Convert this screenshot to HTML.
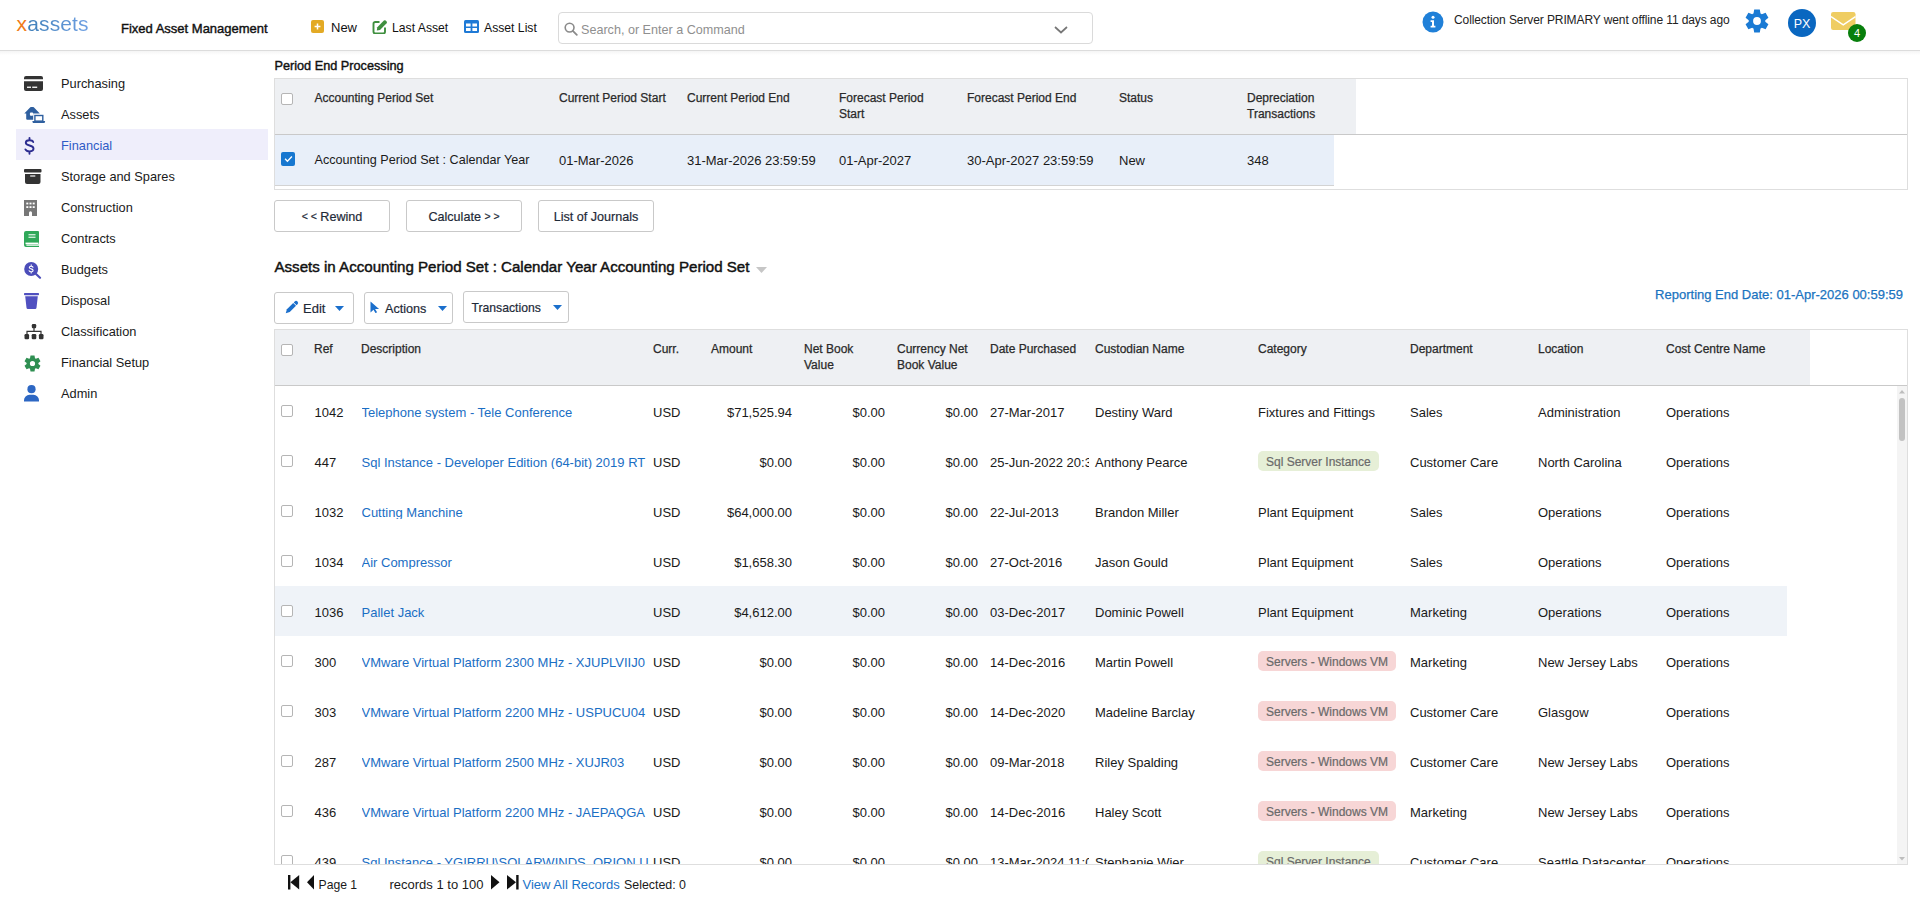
<!DOCTYPE html><html><head><meta charset="utf-8"><style>
html,body{margin:0;padding:0;background:#fff;width:1920px;height:911px;overflow:hidden;position:relative}
body{font-family:"Liberation Sans",sans-serif;}
.t{position:absolute;white-space:nowrap;line-height:1;}
.b{position:absolute;}
.sb{-webkit-text-stroke:0.25px currentColor;}
</style></head><body>
<div class="b" style="left:0px;top:50px;width:1920px;height:1px;background:#dcdcdc"></div>
<div class="b" style="left:0px;top:51px;width:1920px;height:4px;background:linear-gradient(#f5f5f5,#fff)"></div>
<div class="t" style="left:16.5px;top:12.7px;font-size:21px;letter-spacing:0.15px;"><span style="color:#f07b17">x</span><span style="background:linear-gradient(90deg,#3f7fb8,#6fa0e3);-webkit-background-clip:text;color:transparent">assets</span></div>
<div class="t" style="left:121px;top:22.00px;font-size:13px;color:#111;-webkit-text-stroke:0.4px #111">Fixed Asset Management</div>
<svg class="b" style="left:311px;top:20px" width="13" height="13" viewBox="0 0 13 13"><rect x="0" y="0" width="13" height="13" rx="2" fill="#e3aa25"/><path d="M6.5 3.6v5.8M3.6 6.5h5.8" stroke="#fff" stroke-width="1.5"/></svg>
<div class="t" style="left:331px;top:21.00px;font-size:13px;color:#111;">New</div>
<svg class="b" style="left:372px;top:19px" width="16" height="15" viewBox="0 0 16 15"><path d="M7.5 3H3.2A1.7 1.7 0 0 0 1.5 4.7v8.1A1.7 1.7 0 0 0 3.2 14.5h8.1A1.7 1.7 0 0 0 13 12.8V8.5" fill="none" stroke="#3f8f3f" stroke-width="1.9"/><path d="M5.3 8.2L11.9 1.6a1.3 1.3 0 0 1 1.8 0l.9.9a1.3 1.3 0 0 1 0 1.8L8 10.9 4.8 11.5z" fill="#3f8f3f"/></svg>
<div class="t" style="left:392px;top:21.90px;font-size:12.2px;color:#111;">Last Asset</div>
<svg class="b" style="left:464px;top:20px" width="15" height="13" viewBox="0 0 15 13"><rect x="0" y="0" width="15" height="13" rx="1.5" fill="#1f7ad6"/><rect x="2" y="3.5" width="4.6" height="3" fill="#fff"/><rect x="8.4" y="3.5" width="4.6" height="3" fill="#fff"/><rect x="2" y="8" width="4.6" height="3" fill="#fff"/><rect x="8.4" y="8" width="4.6" height="3" fill="#fff"/></svg>
<div class="t" style="left:484px;top:21.90px;font-size:12.2px;color:#111;">Asset List</div>
<div class="b" style="left:558px;top:12px;width:533px;height:30px;border:1px solid #dadada;border-radius:4px;"></div>
<svg class="b" style="left:564px;top:22px" width="14" height="14" viewBox="0 0 14 14"><circle cx="5.6" cy="5.6" r="4.4" fill="none" stroke="#8a8a8a" stroke-width="1.6"/><path d="M8.8 8.8l4 4" stroke="#8a8a8a" stroke-width="1.8" stroke-linecap="round"/></svg>
<div class="t" style="left:581px;top:24.00px;font-size:12.6px;color:#8f8f8f;">Search, or Enter a Command</div>
<svg class="b" style="left:1054px;top:26px" width="14" height="8" viewBox="0 0 14 8"><path d="M1 1l6 5.5L13 1" fill="none" stroke="#777" stroke-width="1.7"/></svg>
<svg class="b" style="left:1422px;top:11px" width="22" height="22" viewBox="0 0 22 22"><circle cx="11" cy="11" r="10.5" fill="#2080d8"/><circle cx="11" cy="6.3" r="1.5" fill="#fff"/><path d="M8.6 9.2h3.4v5.6h1.4v1.8H8.6v-1.8h1.4v-3.8H8.6z" fill="#fff"/></svg>
<div class="t" style="left:1454px;top:14.00px;font-size:12px;color:#222;letter-spacing:-0.1px">Collection Server PRIMARY went offline 11 days ago</div>
<svg class="b" style="left:1744.5px;top:9px" width="24" height="24" viewBox="0 0 24 24"><path fill="#1a7ad4" fill-rule="evenodd" d="M8.50 4.47L9.20 0.43L14.80 0.43L15.50 4.47A8.3 8.3 0 0 1 16.77 5.21L20.62 3.79L23.42 8.64L20.27 11.27A8.3 8.3 0 0 1 20.27 12.73L23.42 15.36L20.62 20.21L16.77 18.79A8.3 8.3 0 0 1 15.50 19.53L14.80 23.57L9.20 23.57L8.50 19.53A8.3 8.3 0 0 1 7.23 18.79L3.38 20.21L0.58 15.36L3.73 12.73A8.3 8.3 0 0 1 3.73 11.27L0.58 8.64L3.38 3.79L7.23 5.21A8.3 8.3 0 0 1 8.50 4.47ZM15.90 12.00A3.9 3.9 0 1 0 8.10 12.00A3.9 3.9 0 1 0 15.90 12.00Z"/></svg>
<div class="b" style="left:1788px;top:9px;width:28px;height:28px;border-radius:50%;background:#0a67c0"></div>
<div class="t" style="left:1790px;top:17.75px;font-size:12.5px;color:#fff;width:24px;text-align:center">PX</div>
<svg class="b" style="left:1830.5px;top:12px" width="25" height="18" viewBox="0 0 25 18"><rect x="0" y="0" width="24.5" height="18" rx="2.2" fill="#efcd62"/><path d="M0 4.6l12.25 8.3L24.5 4.6" fill="none" stroke="#fff" stroke-width="1.5"/></svg>
<div class="b" style="left:1848px;top:24px;width:18px;height:18px;border-radius:50%;background:#087f0c"></div>
<div class="t" style="left:1848px;top:27.50px;font-size:11px;color:#fff;width:18px;text-align:center">4</div>
<div class="b" style="left:16px;top:129px;width:252px;height:31px;background:#efeefb"></div>
<div class="t" style="left:61px;top:77.60px;font-size:12.8px;color:#1a1a1a;">Purchasing</div>
<div class="t" style="left:61px;top:108.60px;font-size:12.8px;color:#1a1a1a;">Assets</div>
<div class="t" style="left:61px;top:139.60px;font-size:12.8px;color:#2f5bc6;">Financial</div>
<div class="t" style="left:61px;top:170.60px;font-size:12.8px;color:#1a1a1a;">Storage and Spares</div>
<div class="t" style="left:61px;top:201.60px;font-size:12.8px;color:#1a1a1a;">Construction</div>
<div class="t" style="left:61px;top:232.60px;font-size:12.8px;color:#1a1a1a;">Contracts</div>
<div class="t" style="left:61px;top:263.60px;font-size:12.8px;color:#1a1a1a;">Budgets</div>
<div class="t" style="left:61px;top:294.60px;font-size:12.8px;color:#1a1a1a;">Disposal</div>
<div class="t" style="left:61px;top:325.60px;font-size:12.8px;color:#1a1a1a;">Classification</div>
<div class="t" style="left:61px;top:356.60px;font-size:12.8px;color:#1a1a1a;">Financial Setup</div>
<div class="t" style="left:61px;top:387.60px;font-size:12.8px;color:#1a1a1a;">Admin</div>
<svg class="b" style="left:24px;top:76px" width="19" height="15" viewBox="0 0 19 15"><path d="M2 0h15a2 2 0 0 1 2 2v1.3H0V2a2 2 0 0 1 2-2z" fill="#333"/><path d="M0 5.2h19v7.8a2 2 0 0 1-2 2H2a2 2 0 0 1-2-2z" fill="#333"/><rect x="3" y="10.6" width="4" height="1.3" fill="#fff"/><rect x="8.2" y="10.6" width="5" height="1.3" fill="#fff"/></svg>
<svg class="b" style="left:24px;top:106px" width="22" height="18" viewBox="0 0 22 18"><path d="M0.3 7.6L6.3 1.3Q6.6 1 7 1H9.1Q9.5 1 9.8 1.3L15.8 7.6H9.2V13.8H3.3Q2.2 13.8 2.2 12.7V7.6Z" fill="#2e5f9f"/><rect x="5.9" y="6.5" width="3.3" height="3.3" rx="1" fill="#fff"/><rect x="10.9" y="9.5" width="7.9" height="5.6" fill="none" stroke="#2e5f9f" stroke-width="1.4"/><path d="M8.3 15H21.2L20.6 16.9H8.9Z" fill="#2e5f9f"/></svg>
<svg class="b" style="left:24px;top:137px" width="11" height="18" viewBox="0 0 11 18"><path d="M9.2 5C8.7 3.8 7.3 3.2 5.4 3.2 3.2 3.2 1.8 4.2 1.8 5.7c0 1.8 1.9 2.3 3.8 2.8 2 .5 3.9 1.1 3.9 3.1 0 1.7-1.6 2.8-4 2.8-2 0-3.5-.7-4.1-2 M5.5 1v2.2 M5.5 14.4v2.3" fill="none" stroke="#2c2c90" stroke-width="1.9" stroke-linecap="round"/></svg>
<svg class="b" style="left:24px;top:169px" width="18" height="15" viewBox="0 0 18 15"><rect x="0" y="0" width="17.5" height="3.6" rx="1" fill="#333"/><path d="M1 5h15.5v8a2 2 0 0 1-2 2H3a2 2 0 0 1-2-2z" fill="#333"/><rect x="6" y="6.3" width="5.5" height="1.5" rx=".7" fill="#d0d0d0"/></svg>
<svg class="b" style="left:24px;top:200px" width="13" height="16" viewBox="0 0 13 16"><path d="M0 0h13v16H8v-3.2a1.5 1.5 0 0 0-3 0V16H0z" fill="#777"/><g fill="#fff"><rect x="2.3" y="2.6" width="2" height="1.8"/><rect x="5.5" y="2.6" width="2" height="1.8"/><rect x="8.7" y="2.6" width="2" height="1.8"/><rect x="2.3" y="6.2" width="2" height="1.8"/><rect x="5.5" y="6.2" width="2" height="1.8"/><rect x="8.7" y="6.2" width="2" height="1.8"/></g></svg>
<svg class="b" style="left:24px;top:231px" width="16" height="16" viewBox="0 0 16 16"><path d="M2 0h12a1 1 0 0 1 1 1v11.5a1 1 0 0 1-1 1H2.5a1 1 0 0 0 0 1.2H15V16H2a2 2 0 0 1-2-2V2a2 2 0 0 1 2-2z" fill="#2fa859"/><rect x="4.5" y="3" width="7" height="1.4" fill="#c9ecd5"/><rect x="4.5" y="5.6" width="7" height="1.4" fill="#c9ecd5"/><rect x="1.5" y="11.6" width="13" height="1.6" fill="#fff"/></svg>
<svg class="b" style="left:24px;top:262px" width="18" height="17" viewBox="0 0 18 17"><circle cx="7.2" cy="7" r="7" fill="#4b4db9"/><path d="M11.5 11.5l4.5 4.2" stroke="#4b4db9" stroke-width="2.2" stroke-linecap="round"/><path d="M9 5.2C8.7 4.5 8 4.2 7.1 4.2 6 4.2 5.3 4.7 5.3 5.5c0 .9 1 1.1 1.9 1.4 1 .3 1.9.6 1.9 1.5 0 .9-.8 1.4-2 1.4-1 0-1.7-.4-2-1 M7.2 2.9v1.2M7.2 9.8v1.2" fill="none" stroke="#fff" stroke-width="1.1" stroke-linecap="round"/></svg>
<svg class="b" style="left:24px;top:293px" width="15" height="16" viewBox="0 0 15 16"><rect x="0" y="0" width="15" height="2.2" rx=".8" fill="#5050c0"/><path d="M1.2 3.3h12.6l-1.3 11.5a1.4 1.4 0 0 1-1.4 1.2H3.9a1.4 1.4 0 0 1-1.4-1.2z" fill="#5050c0"/></svg>
<svg class="b" style="left:24px;top:324px" width="20" height="16" viewBox="0 0 20 16"><rect x="7.8" y="0" width="4.4" height="4.2" rx="1.2" fill="#333"/><path d="M10 4v3.3M3 10V7.3h14V10" fill="none" stroke="#333" stroke-width="1.2"/><rect x="0.5" y="10" width="4.6" height="5.2" rx="1.2" fill="#333"/><rect x="7.7" y="10" width="4.6" height="5.2" rx="1.2" fill="#333"/><rect x="14.9" y="10" width="4.6" height="5.2" rx="1.2" fill="#333"/></svg>
<svg class="b" style="left:24px;top:355px" width="17" height="17" viewBox="0 0 17 17"><path fill="#2f8f52" fill-rule="evenodd" d="M6.00 3.16L6.50 0.44L10.50 0.44L11.00 3.16A5.9 5.9 0 0 1 11.88 3.66L14.48 2.74L16.48 6.20L14.38 7.99A5.9 5.9 0 0 1 14.38 9.01L16.48 10.80L14.48 14.26L11.88 13.34A5.9 5.9 0 0 1 11.00 13.84L10.50 16.56L6.50 16.56L6.00 13.84A5.9 5.9 0 0 1 5.12 13.34L2.52 14.26L0.52 10.80L2.62 9.01A5.9 5.9 0 0 1 2.62 7.99L0.52 6.20L2.52 2.74L5.12 3.66A5.9 5.9 0 0 1 6.00 3.16ZM11.10 8.50A2.6 2.6 0 1 0 5.90 8.50A2.6 2.6 0 1 0 11.10 8.50Z"/></svg>
<svg class="b" style="left:24px;top:385px" width="15" height="17" viewBox="0 0 15 17"><circle cx="7.5" cy="4.2" r="4.1" fill="#2d67c3"/><path d="M0 16.5v-1.2a5.5 5.5 0 0 1 5.5-5.5h4a5.5 5.5 0 0 1 5.5 5.5v1.2z" fill="#2d67c3"/></svg>
<div class="t" style="left:274.5px;top:59.65px;font-size:12.7px;color:#111;-webkit-text-stroke:0.4px #111">Period End Processing</div>
<div class="b" style="left:274px;top:78px;width:1634px;height:112px;box-sizing:border-box;border:1px solid #dedede"></div>
<div class="b" style="left:275px;top:79px;width:1081px;height:55px;background:#eef0f3"></div>
<div class="b" style="left:275px;top:134px;width:1632px;height:1px;background:#c9c9c9"></div>
<div class="b" style="left:275px;top:135px;width:1059px;height:50px;background:#e8eff9"></div>
<div class="b" style="left:275px;top:185px;width:1059px;height:1px;background:#d3d3d3"></div>
<div class="b" style="left:281px;top:93px;width:10px;height:10px;border:1px solid #b5b5b5;border-radius:2px;background:#fff"></div>
<div class="t" style="left:314.5px;top:92.00px;font-size:12px;color:#2a2a2a;-webkit-text-stroke:0.25px #2a2a2a">Accounting Period Set</div>
<div class="t" style="left:559px;top:92.00px;font-size:12px;color:#2a2a2a;-webkit-text-stroke:0.25px #2a2a2a">Current Period Start</div>
<div class="t" style="left:687px;top:92.00px;font-size:12px;color:#2a2a2a;-webkit-text-stroke:0.25px #2a2a2a">Current Period End</div>
<div class="t" style="left:839px;top:92.00px;font-size:12px;color:#2a2a2a;-webkit-text-stroke:0.25px #2a2a2a">Forecast Period</div>
<div class="t" style="left:839px;top:108.00px;font-size:12px;color:#2a2a2a;-webkit-text-stroke:0.25px #2a2a2a">Start</div>
<div class="t" style="left:967px;top:92.00px;font-size:12px;color:#2a2a2a;-webkit-text-stroke:0.25px #2a2a2a">Forecast Period End</div>
<div class="t" style="left:1119px;top:92.00px;font-size:12px;color:#2a2a2a;-webkit-text-stroke:0.25px #2a2a2a">Status</div>
<div class="t" style="left:1247px;top:92.00px;font-size:12px;color:#2a2a2a;-webkit-text-stroke:0.25px #2a2a2a">Depreciation</div>
<div class="t" style="left:1247px;top:108.00px;font-size:12px;color:#2a2a2a;-webkit-text-stroke:0.25px #2a2a2a">Transactions</div>
<svg class="b" style="left:281px;top:152px" width="14" height="14" viewBox="0 0 14 14"><rect x="0" y="0" width="14" height="14" rx="2" fill="#1677d0"/><path d="M4.1 6.8L6.4 9.2 10.9 4.5" fill="none" stroke="#fff" stroke-width="1.35"/></svg>
<div class="t" style="left:314.5px;top:154.20px;font-size:12.6px;color:#1a1a1a;">Accounting Period Set : Calendar Year</div>
<div class="t" style="left:559px;top:153.50px;font-size:13px;color:#1a1a1a;">01-Mar-2026</div>
<div class="t" style="left:687px;top:153.50px;font-size:13px;color:#1a1a1a;">31-Mar-2026 23:59:59</div>
<div class="t" style="left:839px;top:153.50px;font-size:13px;color:#1a1a1a;">01-Apr-2027</div>
<div class="t" style="left:967px;top:153.50px;font-size:13px;color:#1a1a1a;">30-Apr-2027 23:59:59</div>
<div class="t" style="left:1119px;top:153.50px;font-size:13px;color:#1a1a1a;">New</div>
<div class="t" style="left:1247px;top:153.50px;font-size:13px;color:#1a1a1a;">348</div>
<div class="b" style="left:274px;top:200px;width:116px;height:32px;box-sizing:border-box;border:1px solid #c9c9c9;border-radius:3px;background:#fff"></div>
<div class="t" style="left:274px;top:210.70px;width:116px;text-align:center;font-size:12.6px;color:#1e2a38;-webkit-text-stroke:0.2px #1e2a38"><span style="font-size:10.5px;position:relative;top:-0.5px">&lt; &lt;</span> Rewind</div>
<div class="b" style="left:406px;top:200px;width:116px;height:32px;box-sizing:border-box;border:1px solid #c9c9c9;border-radius:3px;background:#fff"></div>
<div class="t" style="left:406px;top:210.70px;width:116px;text-align:center;font-size:12.6px;color:#1e2a38;-webkit-text-stroke:0.2px #1e2a38">Calculate <span style="font-size:10.5px;position:relative;top:-0.5px">&gt; &gt;</span></div>
<div class="b" style="left:538px;top:200px;width:116px;height:32px;box-sizing:border-box;border:1px solid #c9c9c9;border-radius:3px;background:#fff"></div>
<div class="t" style="left:538px;top:210.70px;width:116px;text-align:center;font-size:12.6px;color:#1e2a38;-webkit-text-stroke:0.2px #1e2a38">List of Journals</div>
<div class="t" style="left:274.5px;top:258.65px;font-size:15.1px;color:#111;-webkit-text-stroke:0.45px #111">Assets in Accounting Period Set : Calendar Year Accounting Period Set</div>
<svg class="b" style="left:756px;top:267px" width="11" height="6" viewBox="0 0 11 6"><path d="M0 0h11L5.5 6z" fill="#c6c6c6"/></svg>
<div class="b" style="left:274px;top:292px;width:80px;height:32px;box-sizing:border-box;border:1px solid #c9c9c9;border-radius:3px"></div>
<svg class="b" style="left:283.5px;top:299.5px" width="15" height="15" viewBox="0 0 15 15"><g transform="rotate(45 7.5 7.5)" fill="#1b6fcc"><path d="M5.5 3.1h4v8.9l-2 3.6-2-3.6z"/><path d="M5.5 2.3V1a2 2 0 0 1 4 0v1.3z"/></g></svg>
<div class="t" style="left:303px;top:302.00px;font-size:13px;color:#1e2a38;-webkit-text-stroke:0.2px #1e2a38">Edit</div>
<svg class="b" style="left:335px;top:306px" width="9" height="5" viewBox="0 0 9 5"><path d="M0 0h9L4.5 5z" fill="#1b6fcc"/></svg>
<div class="b" style="left:364px;top:292px;width:89px;height:32px;box-sizing:border-box;border:1px solid #c9c9c9;border-radius:3px"></div>
<svg class="b" style="left:370px;top:301px" width="10" height="12" viewBox="0 0 10 12"><path d="M0.5 0.5v11l3-2.8 2 3.4 1.6-.9-2-3.3h4z" fill="#1b6fcc"/></svg>
<div class="t" style="left:385px;top:302.70px;font-size:12.6px;color:#1e2a38;-webkit-text-stroke:0.2px #1e2a38">Actions</div>
<svg class="b" style="left:437.5px;top:306px" width="9" height="5" viewBox="0 0 9 5"><path d="M0 0h9L4.5 5z" fill="#1b6fcc"/></svg>
<div class="b" style="left:463px;top:291px;width:106px;height:32px;box-sizing:border-box;border:1px solid #c9c9c9;border-radius:3px"></div>
<div class="t" style="left:471.5px;top:301.90px;font-size:12.2px;color:#1e2a38;-webkit-text-stroke:0.2px #1e2a38">Transactions</div>
<svg class="b" style="left:553px;top:305px" width="9" height="5" viewBox="0 0 9 5"><path d="M0 0h9L4.5 5z" fill="#1b6fcc"/></svg>
<div class="t" style="right:17px;top:288.00px;font-size:13px;color:#1a73c0;-webkit-text-stroke:0.25px #1a73c0">Reporting End Date: 01-Apr-2026 00:59:59</div>
<div class="b" style="left:274px;top:329px;width:1634px;height:536px;box-sizing:border-box;border:1px solid #dedede"></div>
<div class="b" style="left:275px;top:330px;width:1535px;height:55px;background:#eef0f3"></div>
<div class="b" style="left:275px;top:385px;width:1632px;height:1px;background:#c9c9c9"></div>
<div class="b" style="left:281px;top:344px;width:10px;height:10px;border:1px solid #b5b5b5;border-radius:2px;background:#fff"></div>
<div class="t" style="left:314px;top:343.00px;font-size:12px;color:#2a2a2a;-webkit-text-stroke:0.25px #2a2a2a">Ref</div>
<div class="t" style="left:361px;top:343.00px;font-size:12px;color:#2a2a2a;-webkit-text-stroke:0.25px #2a2a2a">Description</div>
<div class="t" style="left:653px;top:343.00px;font-size:12px;color:#2a2a2a;-webkit-text-stroke:0.25px #2a2a2a">Curr.</div>
<div class="t" style="left:711px;top:343.00px;font-size:12px;color:#2a2a2a;-webkit-text-stroke:0.25px #2a2a2a">Amount</div>
<div class="t" style="left:804px;top:343.00px;font-size:12px;color:#2a2a2a;-webkit-text-stroke:0.25px #2a2a2a">Net Book</div>
<div class="t" style="left:804px;top:359.00px;font-size:12px;color:#2a2a2a;-webkit-text-stroke:0.25px #2a2a2a">Value</div>
<div class="t" style="left:897px;top:343.00px;font-size:12px;color:#2a2a2a;-webkit-text-stroke:0.25px #2a2a2a">Currency Net</div>
<div class="t" style="left:897px;top:359.00px;font-size:12px;color:#2a2a2a;-webkit-text-stroke:0.25px #2a2a2a">Book Value</div>
<div class="t" style="left:990px;top:343.00px;font-size:12px;color:#2a2a2a;-webkit-text-stroke:0.25px #2a2a2a">Date Purchased</div>
<div class="t" style="left:1095px;top:343.00px;font-size:12px;color:#2a2a2a;-webkit-text-stroke:0.25px #2a2a2a">Custodian Name</div>
<div class="t" style="left:1258px;top:343.00px;font-size:12px;color:#2a2a2a;-webkit-text-stroke:0.25px #2a2a2a">Category</div>
<div class="t" style="left:1410px;top:343.00px;font-size:12px;color:#2a2a2a;-webkit-text-stroke:0.25px #2a2a2a">Department</div>
<div class="t" style="left:1538px;top:343.00px;font-size:12px;color:#2a2a2a;-webkit-text-stroke:0.25px #2a2a2a">Location</div>
<div class="t" style="left:1666px;top:343.00px;font-size:12px;color:#2a2a2a;-webkit-text-stroke:0.25px #2a2a2a">Cost Centre Name</div>
<div class="b" style="left:275px;top:386px;width:1622px;height:478px;overflow:hidden">
<div class="b" style="left:6px;top:19px;width:10px;height:10px;border:1px solid #b5b5b5;border-radius:2px;background:#fff"></div>
<div class="t" style="left:39.5px;top:20.00px;font-size:13px;color:#1a1a1a;">1042</div>
<div class="t" style="left:86.5px;top:20.00px;font-size:13px;color:#1a6ec4;width:287px;overflow:hidden;">Telephone system - Tele Conference</div>
<div class="t" style="left:378px;top:20.00px;font-size:13px;color:#1a1a1a;">USD</div>
<div class="t" style="right:1105px;top:20.00px;font-size:13px;color:#1a1a1a;">$71,525.94</div>
<div class="t" style="right:1012px;top:20.00px;font-size:13px;color:#1a1a1a;">$0.00</div>
<div class="t" style="right:919px;top:20.00px;font-size:13px;color:#1a1a1a;">$0.00</div>
<div class="t" style="left:715px;top:20.00px;font-size:13px;color:#1a1a1a;width:99px;overflow:hidden;">27-Mar-2017</div>
<div class="t" style="left:820px;top:20.00px;font-size:13px;color:#1a1a1a;">Destiny Ward</div>
<div class="t" style="left:983px;top:20.00px;font-size:13px;color:#1a1a1a;">Fixtures and Fittings</div>
<div class="t" style="left:1135px;top:20.00px;font-size:13px;color:#1a1a1a;">Sales</div>
<div class="t" style="left:1263px;top:20.00px;font-size:13px;color:#1a1a1a;">Administration</div>
<div class="t" style="left:1391px;top:20.00px;font-size:13px;color:#1a1a1a;">Operations</div>
<div class="b" style="left:6px;top:69px;width:10px;height:10px;border:1px solid #b5b5b5;border-radius:2px;background:#fff"></div>
<div class="t" style="left:39.5px;top:70.00px;font-size:13px;color:#1a1a1a;">447</div>
<div class="t" style="left:86.5px;top:70.00px;font-size:13px;color:#1a6ec4;width:287px;overflow:hidden;">Sql Instance - Developer Edition (64-bit) 2019 RT</div>
<div class="t" style="left:378px;top:70.00px;font-size:13px;color:#1a1a1a;">USD</div>
<div class="t" style="right:1105px;top:70.00px;font-size:13px;color:#1a1a1a;">$0.00</div>
<div class="t" style="right:1012px;top:70.00px;font-size:13px;color:#1a1a1a;">$0.00</div>
<div class="t" style="right:919px;top:70.00px;font-size:13px;color:#1a1a1a;">$0.00</div>
<div class="t" style="left:715px;top:70.00px;font-size:13px;color:#1a1a1a;width:99px;overflow:hidden;">25-Jun-2022 20:30</div>
<div class="t" style="left:820px;top:70.00px;font-size:13px;color:#1a1a1a;">Anthony Pearce</div>
<div class="t" style="left:983px;top:65px;height:20px;line-height:20px;padding:0 8px;border-radius:5px;background:#e6efd7;font-size:12px;color:#6a6a6a;-webkit-text-stroke:0.2px #6a6a6a"><span style="position:relative;top:1px">Sql Server Instance</span></div>
<div class="t" style="left:1135px;top:70.00px;font-size:13px;color:#1a1a1a;">Customer Care</div>
<div class="t" style="left:1263px;top:70.00px;font-size:13px;color:#1a1a1a;">North Carolina</div>
<div class="t" style="left:1391px;top:70.00px;font-size:13px;color:#1a1a1a;">Operations</div>
<div class="b" style="left:6px;top:119px;width:10px;height:10px;border:1px solid #b5b5b5;border-radius:2px;background:#fff"></div>
<div class="t" style="left:39.5px;top:120.00px;font-size:13px;color:#1a1a1a;">1032</div>
<div class="t" style="left:86.5px;top:120.00px;font-size:13px;color:#1a6ec4;width:287px;overflow:hidden;">Cutting Manchine</div>
<div class="t" style="left:378px;top:120.00px;font-size:13px;color:#1a1a1a;">USD</div>
<div class="t" style="right:1105px;top:120.00px;font-size:13px;color:#1a1a1a;">$64,000.00</div>
<div class="t" style="right:1012px;top:120.00px;font-size:13px;color:#1a1a1a;">$0.00</div>
<div class="t" style="right:919px;top:120.00px;font-size:13px;color:#1a1a1a;">$0.00</div>
<div class="t" style="left:715px;top:120.00px;font-size:13px;color:#1a1a1a;width:99px;overflow:hidden;">22-Jul-2013</div>
<div class="t" style="left:820px;top:120.00px;font-size:13px;color:#1a1a1a;">Brandon Miller</div>
<div class="t" style="left:983px;top:120.00px;font-size:13px;color:#1a1a1a;">Plant Equipment</div>
<div class="t" style="left:1135px;top:120.00px;font-size:13px;color:#1a1a1a;">Sales</div>
<div class="t" style="left:1263px;top:120.00px;font-size:13px;color:#1a1a1a;">Operations</div>
<div class="t" style="left:1391px;top:120.00px;font-size:13px;color:#1a1a1a;">Operations</div>
<div class="b" style="left:6px;top:169px;width:10px;height:10px;border:1px solid #b5b5b5;border-radius:2px;background:#fff"></div>
<div class="t" style="left:39.5px;top:170.00px;font-size:13px;color:#1a1a1a;">1034</div>
<div class="t" style="left:86.5px;top:170.00px;font-size:13px;color:#1a6ec4;width:287px;overflow:hidden;">Air Compressor</div>
<div class="t" style="left:378px;top:170.00px;font-size:13px;color:#1a1a1a;">USD</div>
<div class="t" style="right:1105px;top:170.00px;font-size:13px;color:#1a1a1a;">$1,658.30</div>
<div class="t" style="right:1012px;top:170.00px;font-size:13px;color:#1a1a1a;">$0.00</div>
<div class="t" style="right:919px;top:170.00px;font-size:13px;color:#1a1a1a;">$0.00</div>
<div class="t" style="left:715px;top:170.00px;font-size:13px;color:#1a1a1a;width:99px;overflow:hidden;">27-Oct-2016</div>
<div class="t" style="left:820px;top:170.00px;font-size:13px;color:#1a1a1a;">Jason Gould</div>
<div class="t" style="left:983px;top:170.00px;font-size:13px;color:#1a1a1a;">Plant Equipment</div>
<div class="t" style="left:1135px;top:170.00px;font-size:13px;color:#1a1a1a;">Sales</div>
<div class="t" style="left:1263px;top:170.00px;font-size:13px;color:#1a1a1a;">Operations</div>
<div class="t" style="left:1391px;top:170.00px;font-size:13px;color:#1a1a1a;">Operations</div>
<div class="b" style="left:0;top:200px;width:1512px;height:50px;background:#eff3f8"></div>
<div class="b" style="left:6px;top:219px;width:10px;height:10px;border:1px solid #b5b5b5;border-radius:2px;background:#fff"></div>
<div class="t" style="left:39.5px;top:220.00px;font-size:13px;color:#1a1a1a;">1036</div>
<div class="t" style="left:86.5px;top:220.00px;font-size:13px;color:#1a6ec4;width:287px;overflow:hidden;">Pallet Jack</div>
<div class="t" style="left:378px;top:220.00px;font-size:13px;color:#1a1a1a;">USD</div>
<div class="t" style="right:1105px;top:220.00px;font-size:13px;color:#1a1a1a;">$4,612.00</div>
<div class="t" style="right:1012px;top:220.00px;font-size:13px;color:#1a1a1a;">$0.00</div>
<div class="t" style="right:919px;top:220.00px;font-size:13px;color:#1a1a1a;">$0.00</div>
<div class="t" style="left:715px;top:220.00px;font-size:13px;color:#1a1a1a;width:99px;overflow:hidden;">03-Dec-2017</div>
<div class="t" style="left:820px;top:220.00px;font-size:13px;color:#1a1a1a;">Dominic Powell</div>
<div class="t" style="left:983px;top:220.00px;font-size:13px;color:#1a1a1a;">Plant Equipment</div>
<div class="t" style="left:1135px;top:220.00px;font-size:13px;color:#1a1a1a;">Marketing</div>
<div class="t" style="left:1263px;top:220.00px;font-size:13px;color:#1a1a1a;">Operations</div>
<div class="t" style="left:1391px;top:220.00px;font-size:13px;color:#1a1a1a;">Operations</div>
<div class="b" style="left:6px;top:269px;width:10px;height:10px;border:1px solid #b5b5b5;border-radius:2px;background:#fff"></div>
<div class="t" style="left:39.5px;top:270.00px;font-size:13px;color:#1a1a1a;">300</div>
<div class="t" style="left:86.5px;top:270.00px;font-size:13px;color:#1a6ec4;width:287px;overflow:hidden;">VMware Virtual Platform 2300 MHz - XJUPLVIIJ0</div>
<div class="t" style="left:378px;top:270.00px;font-size:13px;color:#1a1a1a;">USD</div>
<div class="t" style="right:1105px;top:270.00px;font-size:13px;color:#1a1a1a;">$0.00</div>
<div class="t" style="right:1012px;top:270.00px;font-size:13px;color:#1a1a1a;">$0.00</div>
<div class="t" style="right:919px;top:270.00px;font-size:13px;color:#1a1a1a;">$0.00</div>
<div class="t" style="left:715px;top:270.00px;font-size:13px;color:#1a1a1a;width:99px;overflow:hidden;">14-Dec-2016</div>
<div class="t" style="left:820px;top:270.00px;font-size:13px;color:#1a1a1a;">Martin Powell</div>
<div class="t" style="left:983px;top:265px;height:20px;line-height:20px;padding:0 8px;border-radius:5px;background:#f7d6d6;font-size:12px;color:#6a6a6a;-webkit-text-stroke:0.2px #6a6a6a"><span style="position:relative;top:1px">Servers - Windows VM</span></div>
<div class="t" style="left:1135px;top:270.00px;font-size:13px;color:#1a1a1a;">Marketing</div>
<div class="t" style="left:1263px;top:270.00px;font-size:13px;color:#1a1a1a;">New Jersey Labs</div>
<div class="t" style="left:1391px;top:270.00px;font-size:13px;color:#1a1a1a;">Operations</div>
<div class="b" style="left:6px;top:319px;width:10px;height:10px;border:1px solid #b5b5b5;border-radius:2px;background:#fff"></div>
<div class="t" style="left:39.5px;top:320.00px;font-size:13px;color:#1a1a1a;">303</div>
<div class="t" style="left:86.5px;top:320.00px;font-size:13px;color:#1a6ec4;width:287px;overflow:hidden;">VMware Virtual Platform 2200 MHz - USPUCU04</div>
<div class="t" style="left:378px;top:320.00px;font-size:13px;color:#1a1a1a;">USD</div>
<div class="t" style="right:1105px;top:320.00px;font-size:13px;color:#1a1a1a;">$0.00</div>
<div class="t" style="right:1012px;top:320.00px;font-size:13px;color:#1a1a1a;">$0.00</div>
<div class="t" style="right:919px;top:320.00px;font-size:13px;color:#1a1a1a;">$0.00</div>
<div class="t" style="left:715px;top:320.00px;font-size:13px;color:#1a1a1a;width:99px;overflow:hidden;">14-Dec-2020</div>
<div class="t" style="left:820px;top:320.00px;font-size:13px;color:#1a1a1a;">Madeline Barclay</div>
<div class="t" style="left:983px;top:315px;height:20px;line-height:20px;padding:0 8px;border-radius:5px;background:#f7d6d6;font-size:12px;color:#6a6a6a;-webkit-text-stroke:0.2px #6a6a6a"><span style="position:relative;top:1px">Servers - Windows VM</span></div>
<div class="t" style="left:1135px;top:320.00px;font-size:13px;color:#1a1a1a;">Customer Care</div>
<div class="t" style="left:1263px;top:320.00px;font-size:13px;color:#1a1a1a;">Glasgow</div>
<div class="t" style="left:1391px;top:320.00px;font-size:13px;color:#1a1a1a;">Operations</div>
<div class="b" style="left:6px;top:369px;width:10px;height:10px;border:1px solid #b5b5b5;border-radius:2px;background:#fff"></div>
<div class="t" style="left:39.5px;top:370.00px;font-size:13px;color:#1a1a1a;">287</div>
<div class="t" style="left:86.5px;top:370.00px;font-size:13px;color:#1a6ec4;width:287px;overflow:hidden;">VMware Virtual Platform 2500 MHz - XUJR03</div>
<div class="t" style="left:378px;top:370.00px;font-size:13px;color:#1a1a1a;">USD</div>
<div class="t" style="right:1105px;top:370.00px;font-size:13px;color:#1a1a1a;">$0.00</div>
<div class="t" style="right:1012px;top:370.00px;font-size:13px;color:#1a1a1a;">$0.00</div>
<div class="t" style="right:919px;top:370.00px;font-size:13px;color:#1a1a1a;">$0.00</div>
<div class="t" style="left:715px;top:370.00px;font-size:13px;color:#1a1a1a;width:99px;overflow:hidden;">09-Mar-2018</div>
<div class="t" style="left:820px;top:370.00px;font-size:13px;color:#1a1a1a;">Riley Spalding</div>
<div class="t" style="left:983px;top:365px;height:20px;line-height:20px;padding:0 8px;border-radius:5px;background:#f7d6d6;font-size:12px;color:#6a6a6a;-webkit-text-stroke:0.2px #6a6a6a"><span style="position:relative;top:1px">Servers - Windows VM</span></div>
<div class="t" style="left:1135px;top:370.00px;font-size:13px;color:#1a1a1a;">Customer Care</div>
<div class="t" style="left:1263px;top:370.00px;font-size:13px;color:#1a1a1a;">New Jersey Labs</div>
<div class="t" style="left:1391px;top:370.00px;font-size:13px;color:#1a1a1a;">Operations</div>
<div class="b" style="left:6px;top:419px;width:10px;height:10px;border:1px solid #b5b5b5;border-radius:2px;background:#fff"></div>
<div class="t" style="left:39.5px;top:420.00px;font-size:13px;color:#1a1a1a;">436</div>
<div class="t" style="left:86.5px;top:420.00px;font-size:13px;color:#1a6ec4;width:287px;overflow:hidden;">VMware Virtual Platform 2200 MHz - JAEPAQGA</div>
<div class="t" style="left:378px;top:420.00px;font-size:13px;color:#1a1a1a;">USD</div>
<div class="t" style="right:1105px;top:420.00px;font-size:13px;color:#1a1a1a;">$0.00</div>
<div class="t" style="right:1012px;top:420.00px;font-size:13px;color:#1a1a1a;">$0.00</div>
<div class="t" style="right:919px;top:420.00px;font-size:13px;color:#1a1a1a;">$0.00</div>
<div class="t" style="left:715px;top:420.00px;font-size:13px;color:#1a1a1a;width:99px;overflow:hidden;">14-Dec-2016</div>
<div class="t" style="left:820px;top:420.00px;font-size:13px;color:#1a1a1a;">Haley Scott</div>
<div class="t" style="left:983px;top:415px;height:20px;line-height:20px;padding:0 8px;border-radius:5px;background:#f7d6d6;font-size:12px;color:#6a6a6a;-webkit-text-stroke:0.2px #6a6a6a"><span style="position:relative;top:1px">Servers - Windows VM</span></div>
<div class="t" style="left:1135px;top:420.00px;font-size:13px;color:#1a1a1a;">Marketing</div>
<div class="t" style="left:1263px;top:420.00px;font-size:13px;color:#1a1a1a;">New Jersey Labs</div>
<div class="t" style="left:1391px;top:420.00px;font-size:13px;color:#1a1a1a;">Operations</div>
<div class="b" style="left:6px;top:469px;width:10px;height:10px;border:1px solid #b5b5b5;border-radius:2px;background:#fff"></div>
<div class="t" style="left:39.5px;top:470.00px;font-size:13px;color:#1a1a1a;">439</div>
<div class="t" style="left:86.5px;top:470.00px;font-size:13px;color:#1a6ec4;width:287px;overflow:hidden;">Sql Instance - YGIRRU\SOLARWINDS_ORION Unknown</div>
<div class="t" style="left:378px;top:470.00px;font-size:13px;color:#1a1a1a;">USD</div>
<div class="t" style="right:1105px;top:470.00px;font-size:13px;color:#1a1a1a;">$0.00</div>
<div class="t" style="right:1012px;top:470.00px;font-size:13px;color:#1a1a1a;">$0.00</div>
<div class="t" style="right:919px;top:470.00px;font-size:13px;color:#1a1a1a;">$0.00</div>
<div class="t" style="left:715px;top:470.00px;font-size:13px;color:#1a1a1a;width:99px;overflow:hidden;">13-Mar-2024 11:00</div>
<div class="t" style="left:820px;top:470.00px;font-size:13px;color:#1a1a1a;">Stephanie Wier</div>
<div class="t" style="left:983px;top:465px;height:20px;line-height:20px;padding:0 8px;border-radius:5px;background:#e6efd7;font-size:12px;color:#6a6a6a;-webkit-text-stroke:0.2px #6a6a6a"><span style="position:relative;top:1px">Sql Server Instance</span></div>
<div class="t" style="left:1135px;top:470.00px;font-size:13px;color:#1a1a1a;">Customer Care</div>
<div class="t" style="left:1263px;top:470.00px;font-size:13px;color:#1a1a1a;">Seattle Datacenter</div>
<div class="t" style="left:1391px;top:470.00px;font-size:13px;color:#1a1a1a;">Operations</div>
</div>
<div class="b" style="left:1897px;top:386px;width:10px;height:478px;background:#f4f4f4"></div>
<svg class="b" style="left:1899px;top:390px" width="6" height="3.5" viewBox="0 0 6 3.5"><path d="M0 3.5L3 0l3 3.5z" fill="#bdbdbd"/></svg>
<div class="b" style="left:1899px;top:398px;width:6px;height:43px;background:#c2c2c2;border-radius:3px"></div>
<svg class="b" style="left:1899px;top:857px" width="6" height="3.5" viewBox="0 0 6 3.5"><path d="M0 0h6L3 3.5z" fill="#bdbdbd"/></svg>
<svg class="b" style="left:288px;top:875px" width="12" height="14.5" viewBox="0 0 12 14.5"><rect x="0" y="0" width="2.4" height="14.5" fill="#111"/><path d="M11.2 0v14.5L2.4 7.25z" fill="#111"/></svg>
<svg class="b" style="left:307px;top:875px" width="7" height="14.5" viewBox="0 0 7 14.5"><path d="M7 0v14.5L0 7.25z" fill="#111"/></svg>
<div class="t" style="left:318.5px;top:878.90px;font-size:12.2px;color:#1a1a1a;">Page 1</div>
<div class="t" style="left:389.5px;top:878.00px;font-size:13px;color:#1a1a1a;">records 1 to 100</div>
<svg class="b" style="left:491px;top:875px" width="9" height="14.5" viewBox="0 0 9 14.5"><path d="M0 0v14.5l8.5-7.25z" fill="#111"/></svg>
<svg class="b" style="left:507px;top:875px" width="12" height="14.5" viewBox="0 0 12 14.5"><path d="M0 0v14.5l9-7.25z" fill="#111"/><rect x="9.2" y="0" width="2.4" height="14.5" fill="#111"/></svg>
<div class="t" style="left:522.5px;top:878.00px;font-size:13px;color:#1a73c8;">View All Records</div>
<div class="t" style="left:624px;top:878.80px;font-size:12.4px;color:#1a1a1a;">Selected: 0</div>
</body></html>
